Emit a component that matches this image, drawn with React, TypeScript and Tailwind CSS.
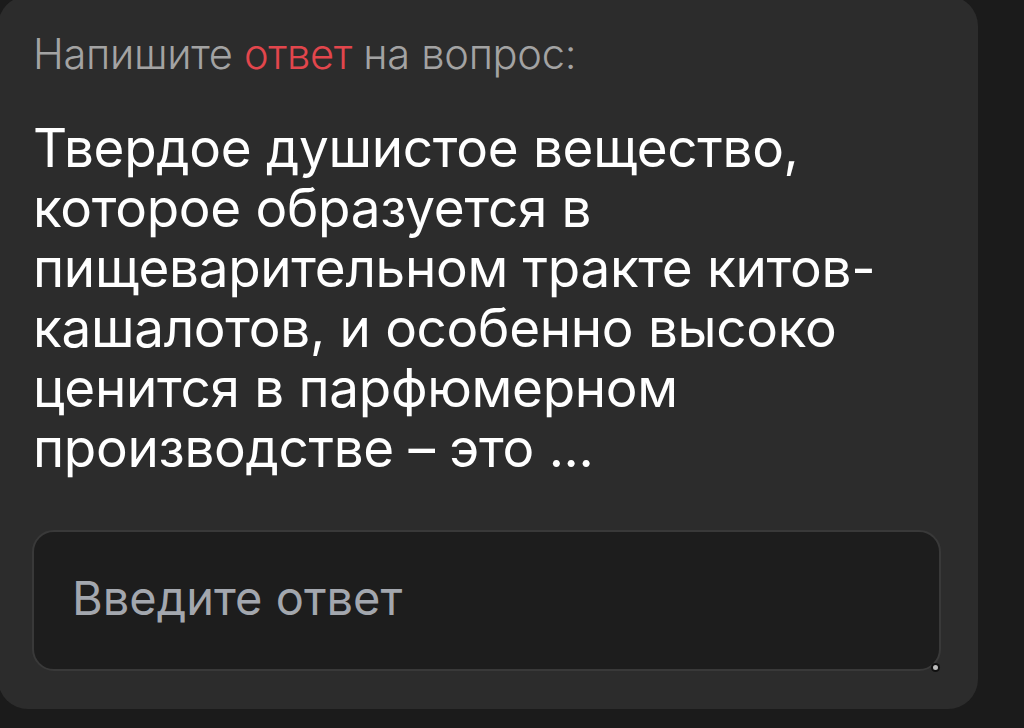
export default function App() {
  return (
    <div className="h-[728px] w-[1024px] overflow-hidden bg-[#1b1b1b] font-['Inter','Noto_Sans',sans-serif]">
      <div className="-ml-[2px] -mt-[4px] h-[713px] w-[980px] rounded-[30px] bg-[#2c2c2c] pl-[35px] pr-[38px] pt-[30px]">
        <div className="text-[41.6px] font-light leading-[56px] tracking-[-0.3px] text-[#a3a3a3]">
          Напишите <span className="text-[#e2464c]">ответ</span> на вопрос:
        </div>

        <p className="mt-[36px] text-[53px] leading-[60px] tracking-[-0.3px] text-white">
          Твердое душистое вещество, которое образуется в пищеварительном тракте китов-кашалотов, и особенно высоко ценится в парфюмерном производстве – это ...
        </p>

        <div className="relative -ml-[1px] mt-[52px]">
          <textarea
            placeholder="Введите ответ"
            className="block h-[141px] w-[909px] resize-none rounded-[22px] border-2 border-[#393939] bg-[#1d1d1d] px-[38px] pt-[38px] text-[47px] leading-[56px] text-white outline-none placeholder:text-[#a3a7ae]"
          />
          <span className="absolute bottom-[1px] right-[2px] h-[5px] w-[5px] rounded-full bg-[#bdbdbd] ring-2 ring-[#111]" />
        </div>
      </div>
    </div>
  );
}
